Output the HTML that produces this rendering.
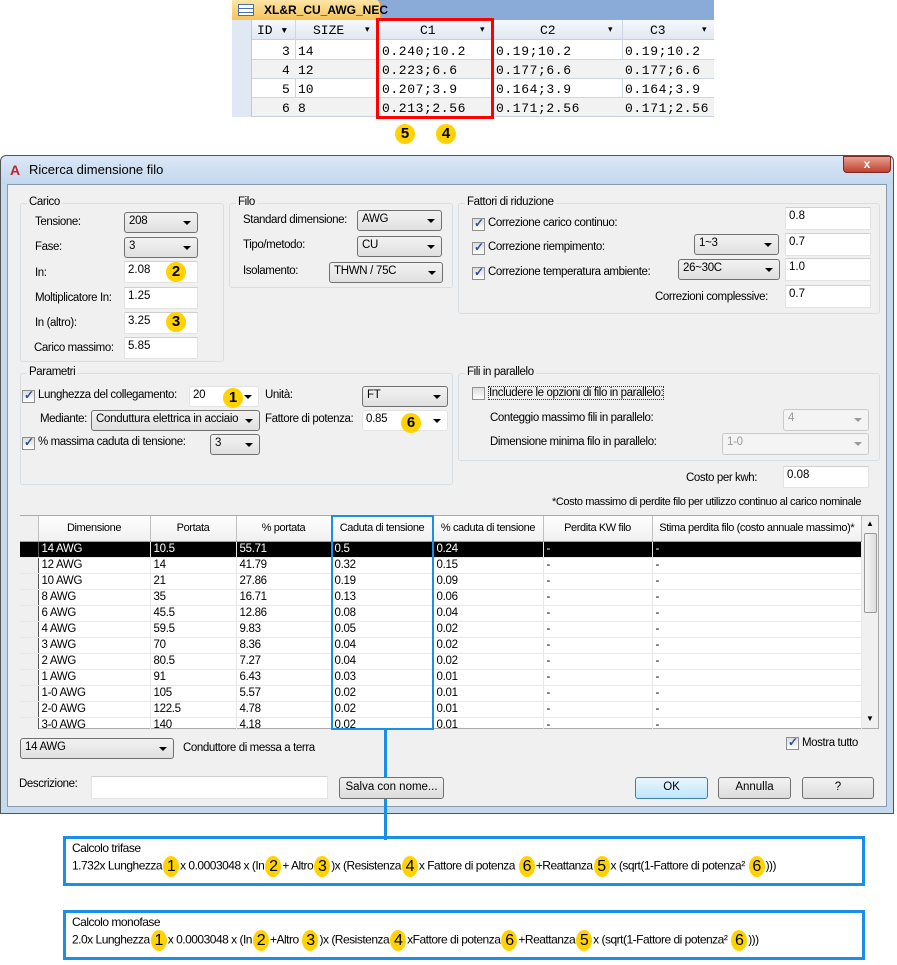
<!DOCTYPE html>
<html><head><meta charset="utf-8"><style>
*{box-sizing:border-box;margin:0;padding:0}
body{width:897px;height:965px;background:#fff;position:relative;overflow:hidden;font-family:"Liberation Sans",sans-serif;font-size:12px;color:#000}
.a{position:absolute;white-space:nowrap}
.mono{font-family:"Liberation Mono",monospace;font-size:13px}
.lbl{position:absolute;white-space:nowrap;font-size:11.5px;letter-spacing:-0.4px}
.grp{position:absolute;border:1px solid #d5dfe5;border-radius:3px}
.gt{position:absolute;top:-8px;left:6px;background:#f0f0f0;padding:0 2px;font-size:11.5px;letter-spacing:-0.4px}
.sel{position:absolute;border:1px solid #707070;border-radius:3px;background:linear-gradient(#f2f2f2,#e0e0e0);padding:2px 4px;font-size:11.5px;letter-spacing:-0.3px;overflow:hidden;white-space:nowrap}
.sel:after{content:"";position:absolute;right:6px;top:8px;border:4px solid transparent;border-top:4px solid #000;border-bottom:0}
.sel.dis{border-color:#c8c8c8;background:#f4f4f4;color:#999}
.sel.dis:after{border-top-color:#999}
.tb{position:absolute;background:#fff;border:1px solid #e3e3e3;border-top-color:#d0d0d0;padding:2px 3px;font-size:11.5px}
.cb{position:absolute;width:13px;height:13px;border:1px solid #8f8f8f;background:linear-gradient(#dcdcdc,#fff)}
.cb.on:after{content:"✓";position:absolute;left:1px;top:-3px;font-size:12px;color:#2a4f9a;font-weight:bold}
.btn{position:absolute;border:1px solid #707070;border-radius:3px;background:linear-gradient(#f2f2f2,#dcdcdc);text-align:center;font-size:11.5px;padding-top:3px}
.bd{position:absolute;width:20px;height:20px;border-radius:50%;background:#ffd200;text-align:center;font-weight:bold;font-size:15px;line-height:20px;color:#000}
.ob{display:inline-block;width:16px;height:21px;border-radius:50%;background:#ffd200;text-align:center;font-size:16px;line-height:21px;vertical-align:middle;margin:0 1px}
table.g{position:absolute;border-collapse:collapse;font-size:11.5px;table-layout:fixed}
table.g td{height:16px;line-height:15px;padding:0 3px;border-right:1px solid #e8e8e8;border-bottom:1px solid #e8e8e8;white-space:nowrap;overflow:hidden;letter-spacing:-0.3px}
table.g th{height:25px;font-weight:normal;border-right:1px solid #c0c0c0;background:linear-gradient(#fff,#f0f0f0);border-bottom:1px solid #a0a0a0;white-space:nowrap;overflow:hidden;font-size:11px;letter-spacing:-0.4px}
table.g td.rh{background:#f0f0f0;border-right:1px solid #555;padding:0}
table.g tr.s td{background:#000;color:#fff}
.fb{position:absolute;left:63px;width:802px;height:50px;border:3px solid #1a8fe8;font-size:12px;letter-spacing:-0.5px;padding:2px 0 0 6px;line-height:15px}
</style></head><body>

<!-- top access table -->
<div class="a" style="left:232px;top:0;width:482px;height:20px;background:#8aaad8"></div>
<div class="a" style="left:232px;top:0;width:150px;height:20px;background:linear-gradient(#fde6a8,#f5c35a);border-right:2px solid #e0a040;border-radius:0 6px 0 0;font-weight:bold;font-size:12px;padding:3px 0 0 32px">XL&amp;R_CU_AWG_NEC</div>
<div class="a" style="left:238px;top:4px;width:16px;height:12px;border:1px solid #4a70b0;background:repeating-linear-gradient(#fff 0 3px,#4a70b0 3px 4px)"></div>
<div class="a" style="left:232px;top:20px;width:482px;height:97px;background:#fff;border-bottom:1px solid #c8d0dc"></div>
<div class="a" style="left:232px;top:20px;width:482px;height:20px;background:linear-gradient(#f6f8fc,#e0e8f2);border-bottom:1px solid #c8d0dc"></div>
<div class="a" style="left:232px;top:20px;width:20px;height:97px;background:#e0e8f4;border-right:1px solid #c0c8d8"></div>
<div class="a mono" style="left:257px;top:23px">ID ▾</div>
<div class="a mono" style="left:313px;top:23px">SIZE</div><div class="a" style="left:365px;top:24px;font-size:9px">▾</div>
<div class="a mono" style="left:420px;top:23px">C1</div><div class="a" style="left:480px;top:24px;font-size:9px">▾</div>
<div class="a mono" style="left:540px;top:23px">C2</div><div class="a" style="left:608px;top:24px;font-size:9px">▾</div>
<div class="a mono" style="left:650px;top:23px">C3</div><div class="a" style="left:702px;top:24px;font-size:9px">▾</div>
<div class="a" style="left:295px;top:20px;width:1px;height:97px;background:#d0d6e0"></div>
<div class="a" style="left:377px;top:20px;width:1px;height:97px;background:#d0d6e0"></div>
<div class="a" style="left:492px;top:20px;width:1px;height:97px;background:#d0d6e0"></div>
<div class="a" style="left:622px;top:20px;width:1px;height:97px;background:#d0d6e0"></div>
<div class="a" style="left:252px;top:59px;width:462px;height:1px;background:#d0d6e0"></div>
<div class="a" style="left:252px;top:78px;width:462px;height:1px;background:#d0d6e0"></div>
<div class="a" style="left:252px;top:97px;width:462px;height:1px;background:#d0d6e0"></div>
<div class="a" style="left:252px;top:60px;width:462px;height:18px;background:#f2f2f2"></div>
<div class="a" style="left:252px;top:98px;width:462px;height:18px;background:#f2f2f2"></div>
<div class="a mono" style="left:282px;top:42px;line-height:19px">3<br>4<br>5<br>6</div>
<div class="a mono" style="left:298px;top:42px;line-height:19px">14<br>12<br>10<br>8</div>
<div class="a mono" style="left:382px;top:42px;line-height:19px;letter-spacing:0.6px">0.240;10.2<br>0.223;6.6<br>0.207;3.9<br>0.213;2.56</div>
<div class="a mono" style="left:496px;top:42px;line-height:19px;letter-spacing:0.6px">0.19;10.2<br>0.177;6.6<br>0.164;3.9<br>0.171;2.56</div>
<div class="a mono" style="left:625px;top:42px;line-height:19px;letter-spacing:0.6px">0.19;10.2<br>0.177;6.6<br>0.164;3.9<br>0.171;2.56</div>
<div class="a" style="left:376px;top:18px;width:118px;height:101px;border:3px solid #f00"></div>
<div class="bd" style="left:395px;top:124px">5</div>
<div class="bd" style="left:436px;top:124px">4</div>

<!-- dialog frame -->
<div class="a" style="left:0;top:155px;width:894px;height:659px;background:#c6daee;border:1px solid #555;border-radius:6px 6px 0 0"></div>
<div class="a" style="left:1px;top:156px;width:892px;height:28px;background:linear-gradient(#dbe8f6,#c2d7ee);border-radius:6px 6px 0 0"></div>
<div class="a" style="left:10px;top:162px;font-weight:bold;color:#c8202a;font-size:14px">A</div>
<div class="a" style="left:29px;top:162px;font-size:13px">Ricerca dimensione filo</div>
<div class="a" style="left:843px;top:156px;width:48px;height:17px;background:linear-gradient(#e8a090,#c04030);border:1px solid #7a2a20;border-radius:0 0 4px 4px;color:#fff;text-align:center;font-weight:bold;font-size:12px;line-height:15px">x</div>
<div class="a" style="left:7px;top:184px;width:880px;height:623px;background:#f0f0f0;border:1px solid #8a9aaa"></div>

<!-- Carico -->
<div class="grp" style="left:20px;top:203px;width:204px;height:159px"><span class="gt">Carico</span></div>
<div class="lbl" style="left:35px;top:216px">Tensione:</div>
<div class="sel" style="left:124px;top:212px;width:74px;height:21px">208</div>
<div class="lbl" style="left:35px;top:241px">Fase:</div>
<div class="sel" style="left:124px;top:237px;width:74px;height:21px">3</div>
<div class="lbl" style="left:35px;top:267px">In:</div>
<div class="tb" style="left:124px;top:261px;width:74px;height:22px">2.08</div>
<div class="bd" style="left:166px;top:262px">2</div>
<div class="lbl" style="left:35px;top:292px">Moltiplicatore In:</div>
<div class="tb" style="left:124px;top:287px;width:74px;height:22px">1.25</div>
<div class="lbl" style="left:35px;top:317px">In (altro):</div>
<div class="tb" style="left:124px;top:312px;width:74px;height:22px">3.25</div>
<div class="bd" style="left:166px;top:312px">3</div>
<div class="lbl" style="left:34px;top:342px">Carico massimo:</div>
<div class="tb" style="left:124px;top:337px;width:74px;height:22px">5.85</div>

<!-- Filo -->
<div class="grp" style="left:229px;top:203px;width:224px;height:85px"><span class="gt">Filo</span></div>
<div class="lbl" style="left:243px;top:214px">Standard dimensione:</div>
<div class="sel" style="left:357px;top:210px;width:85px;height:21px">AWG</div>
<div class="lbl" style="left:243px;top:239px">Tipo/metodo:</div>
<div class="sel" style="left:357px;top:236px;width:85px;height:21px">CU</div>
<div class="lbl" style="left:243px;top:265px">Isolamento:</div>
<div class="sel" style="left:329px;top:262px;width:114px;height:21px">THWN / 75C</div>

<!-- Fattori -->
<div class="grp" style="left:458px;top:203px;width:422px;height:111px"><span class="gt">Fattori di riduzione</span></div>
<div class="cb on" style="left:472px;top:218px"></div><div class="lbl" style="left:488px;top:217px">Correzione carico continuo:</div>
<div class="tb" style="left:785px;top:207px;width:86px;height:23px">0.8</div>
<div class="cb on" style="left:472px;top:242px"></div><div class="lbl" style="left:488px;top:241px">Correzione riempimento:</div>
<div class="sel" style="left:694px;top:234px;width:85px;height:21px">1~3</div>
<div class="tb" style="left:785px;top:233px;width:86px;height:23px">0.7</div>
<div class="cb on" style="left:472px;top:267px"></div><div class="lbl" style="left:488px;top:266px">Correzione temperatura ambiente:</div>
<div class="sel" style="left:678px;top:259px;width:102px;height:21px">26~30C</div>
<div class="tb" style="left:785px;top:258px;width:86px;height:23px">1.0</div>
<div class="lbl" style="left:655px;top:291px">Correzioni complessive:</div>
<div class="tb" style="left:785px;top:285px;width:86px;height:23px">0.7</div>

<!-- Parametri -->
<div class="grp" style="left:20px;top:373px;width:433px;height:112px"><span class="gt">Parametri</span></div>
<div class="cb on" style="left:22px;top:390px"></div><div class="lbl" style="left:38px;top:389px">Lunghezza del collegamento:</div>
<div class="tb sel" style="left:189px;top:386px;width:70px;height:21px;background:#fff;border-color:#e3e3e3">20</div>
<div class="bd" style="left:223px;top:388px">1</div>
<div class="lbl" style="left:265px;top:389px">Unità:</div>
<div class="sel" style="left:362px;top:386px;width:86px;height:21px">FT</div>
<div class="lbl" style="left:40px;top:413px">Mediante:</div>
<div class="sel" style="left:91px;top:410px;width:169px;height:21px;padding-right:16px">Conduttura elettrica in acciaio</div>
<div class="lbl" style="left:265px;top:413px">Fattore di potenza:</div>
<div class="tb sel" style="left:362px;top:410px;width:86px;height:21px;background:#fff;border-color:#e3e3e3">0.85</div>
<div class="bd" style="left:401px;top:413px">6</div>
<div class="cb on" style="left:22px;top:437px"></div><div class="lbl" style="left:38px;top:436px">% massima caduta di tensione:</div>
<div class="sel" style="left:210px;top:434px;width:50px;height:21px">3</div>

<!-- Fili in parallelo -->
<div class="grp" style="left:458px;top:373px;width:422px;height:88px"><span class="gt">Fili in parallelo</span></div>
<div class="cb" style="left:472px;top:387px"></div><div class="lbl" style="left:488px;top:386px;border:1px dotted #333">Includere le opzioni di filo in parallelo:</div>
<div class="lbl" style="left:490px;top:412px">Conteggio massimo fili in parallelo:</div>
<div class="sel dis" style="left:783px;top:409px;width:86px;height:22px">4</div>
<div class="lbl" style="left:490px;top:436px">Dimensione minima filo in parallelo:</div>
<div class="sel dis" style="left:722px;top:433px;width:147px;height:22px">1-0</div>
<div class="lbl" style="left:686px;top:472px">Costo per kwh:</div>
<div class="tb" style="left:783px;top:466px;width:86px;height:22px">0.08</div>
<div class="lbl" style="left:552px;top:496px;font-size:11px">*Costo massimo di perdite filo per utilizzo continuo al carico nominale</div>

<!-- grid -->
<div class="a" style="left:20px;top:515px;width:859px;height:214px;background:#fff;border:1px solid #aaa"></div>
<table class="g" style="left:20px;top:516px;width:842px">
<colgroup><col style="width:18px"><col style="width:112px"><col style="width:86px"><col style="width:95px"><col style="width:102px"><col style="width:110px"><col style="width:109px"><col></colgroup>
<tr><th style="background:#f0f0f0"></th><th>Dimensione</th><th>Portata</th><th>% portata</th><th>Caduta di tensione</th><th>% caduta di tensione</th><th>Perdita KW filo</th><th>Stima perdita filo (costo annuale massimo)*</th></tr>
<tr class="s"><td class="rh"></td><td>14 AWG</td><td>10.5</td><td>55.71</td><td>0.5</td><td>0.24</td><td>-</td><td>-</td></tr>
<tr><td class="rh"></td><td>12 AWG</td><td>14</td><td>41.79</td><td>0.32</td><td>0.15</td><td>-</td><td>-</td></tr>
<tr><td class="rh"></td><td>10 AWG</td><td>21</td><td>27.86</td><td>0.19</td><td>0.09</td><td>-</td><td>-</td></tr>
<tr><td class="rh"></td><td>8 AWG</td><td>35</td><td>16.71</td><td>0.13</td><td>0.06</td><td>-</td><td>-</td></tr>
<tr><td class="rh"></td><td>6 AWG</td><td>45.5</td><td>12.86</td><td>0.08</td><td>0.04</td><td>-</td><td>-</td></tr>
<tr><td class="rh"></td><td>4 AWG</td><td>59.5</td><td>9.83</td><td>0.05</td><td>0.02</td><td>-</td><td>-</td></tr>
<tr><td class="rh"></td><td>3 AWG</td><td>70</td><td>8.36</td><td>0.04</td><td>0.02</td><td>-</td><td>-</td></tr>
<tr><td class="rh"></td><td>2 AWG</td><td>80.5</td><td>7.27</td><td>0.04</td><td>0.02</td><td>-</td><td>-</td></tr>
<tr><td class="rh"></td><td>1 AWG</td><td>91</td><td>6.43</td><td>0.03</td><td>0.01</td><td>-</td><td>-</td></tr>
<tr><td class="rh"></td><td>1-0 AWG</td><td>105</td><td>5.57</td><td>0.02</td><td>0.01</td><td>-</td><td>-</td></tr>
<tr><td class="rh"></td><td>2-0 AWG</td><td>122.5</td><td>4.78</td><td>0.02</td><td>0.01</td><td>-</td><td>-</td></tr>
<tr><td class="rh"></td><td>3-0 AWG</td><td>140</td><td>4.18</td><td>0.02</td><td>0.01</td><td>-</td><td>-</td></tr>
</table>
<div class="a" style="left:20px;top:729px;width:860px;height:8px;background:#f0f0f0"></div>
<div class="a" style="left:862px;top:516px;width:16px;height:212px;background:#f0f0f0"></div>
<div class="a" style="left:864px;top:533px;width:13px;height:80px;background:linear-gradient(90deg,#f4f4f4,#dedede);border:1px solid #999;border-radius:2px"></div>
<div class="a" style="left:866px;top:519px;font-size:8px">▲</div>
<div class="a" style="left:866px;top:714px;font-size:8px">▼</div>
<div class="a" style="left:331px;top:515px;width:103px;height:215px;border:2px solid #1a8fe8"></div>
<div class="a" style="left:384px;top:730px;width:3px;height:110px;background:#1a8fe8"></div>

<div class="sel" style="left:20px;top:738px;width:154px;height:21px">14 AWG</div>
<div class="lbl" style="left:183px;top:742px">Conduttore di messa a terra</div>
<div class="cb on" style="left:786px;top:737px"></div><div class="lbl" style="left:802px;top:737px">Mostra tutto</div>
<div class="lbl" style="left:19px;top:778px">Descrizione:</div>
<div class="tb" style="left:91px;top:776px;width:237px;height:23px"></div>
<div class="btn" style="left:339px;top:777px;width:105px;height:22px">Salva con nome...</div>
<div class="btn" style="left:635px;top:777px;width:73px;height:22px;border-color:#3c7fb1;background:linear-gradient(#eaf6fd,#bee6fd)">OK</div>
<div class="btn" style="left:718px;top:777px;width:73px;height:22px">Annulla</div>
<div class="btn" style="left:802px;top:777px;width:72px;height:22px">?</div>

<!-- formulas -->
<div class="fb" style="top:836px">Calcolo trifase<br>1.732x Lunghezza<span class="ob">1</span>x 0.0003048 x (In<span class="ob">2</span>+ Altro<span class="ob">3</span>)x (Resistenza<span class="ob">4</span>x Fattore di potenza <span class="ob">6</span>+Reattanza<span class="ob">5</span>x (sqrt(1-Fattore di potenza² <span class="ob">6</span>)))</div>
<div class="fb" style="top:910px">Calcolo monofase<br>2.0x Lunghezza<span class="ob">1</span>x 0.0003048 x (In<span class="ob">2</span>+Altro <span class="ob">3</span>)x (Resistenza<span class="ob">4</span>xFattore di potenza<span class="ob">6</span>+Reattanza<span class="ob">5</span>x (sqrt(1-Fattore di potenza² <span class="ob">6</span>)))</div>
</body></html>
